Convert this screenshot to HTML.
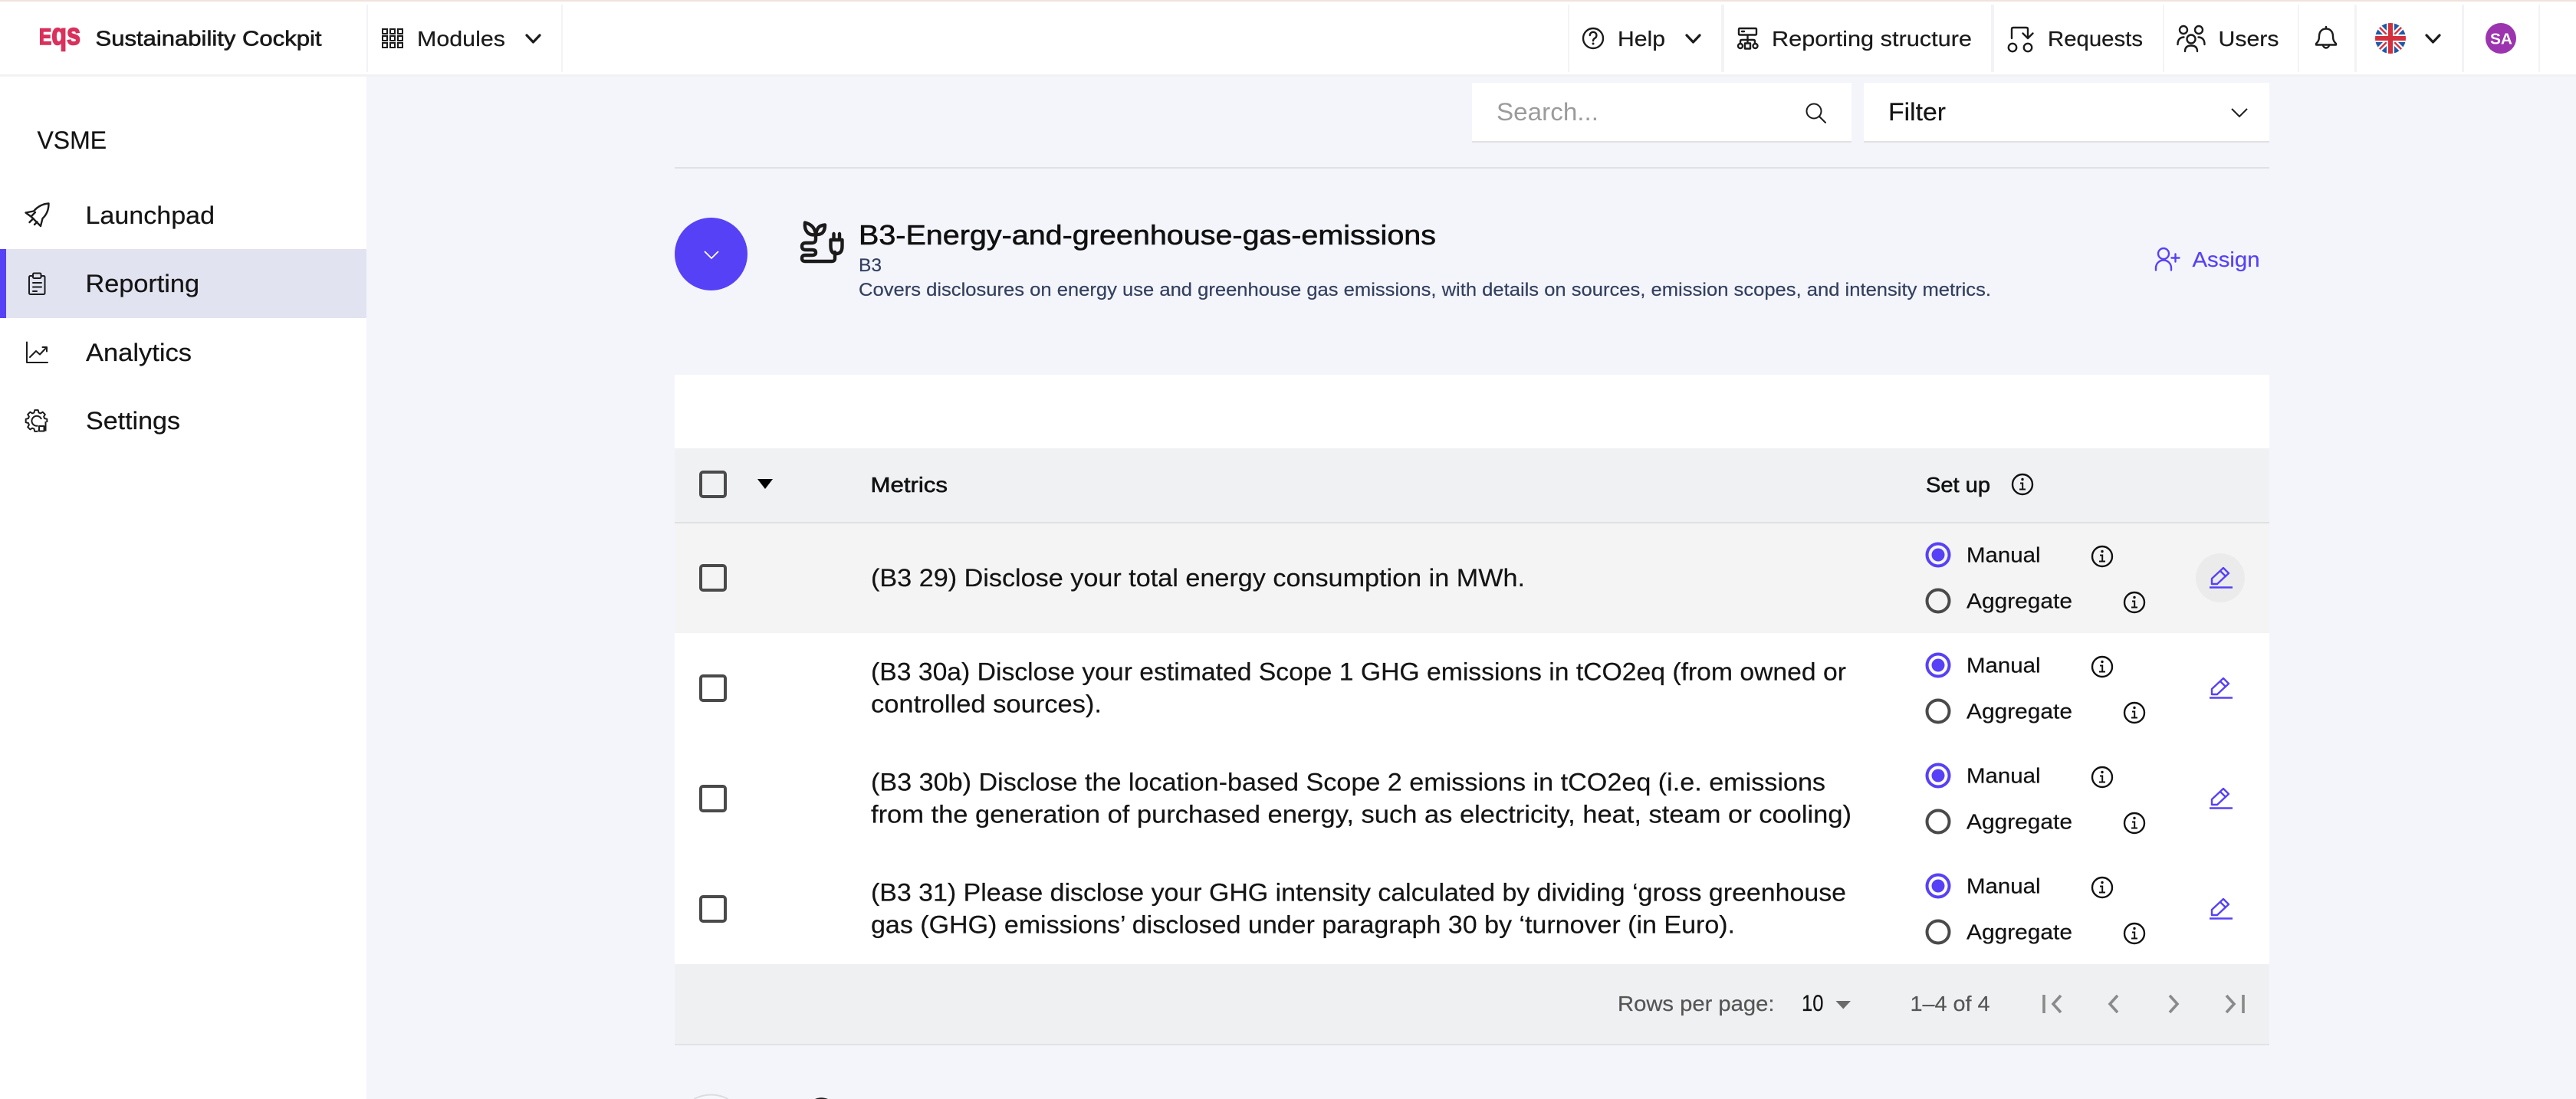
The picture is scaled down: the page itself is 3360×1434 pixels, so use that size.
<!DOCTYPE html>
<html lang="en">
<head>
<meta charset="utf-8">
<title>VSME Reporting</title>
<style>
html,body{margin:0;padding:0;background:#f4f5fb;width:3360px;height:1434px;overflow:hidden}
svg{display:block}
text{font-family:"Liberation Sans",sans-serif;font-size:32px;fill:#141414;white-space:pre;stroke:#141414;stroke-width:.2px}
.h{font-size:28px;fill:#1a1a1a}
.m{stroke:#141414;stroke-width:.6px}
.s{font-size:28px;fill:#111}
.d{font-size:24px;fill:#33405f;stroke:#33405f}
.g{font-size:28px;fill:#555;stroke:#555}
.ic{fill:none;stroke:#1c1c1c;stroke-width:2.4;stroke-linecap:round;stroke-linejoin:round}
.p{fill:none;stroke:#5641f6;stroke-width:2.4;stroke-linecap:round;stroke-linejoin:round}
.lg{font-weight:700;fill:#d9305c;stroke:#d9305c;stroke-width:1.6px}
</style>
</head>
<body>
<svg xmlns="http://www.w3.org/2000/svg" width="3360" height="1434" viewBox="0 0 3360 1434">
<defs>
<g id="info"><circle cx="0" cy="0" r="13" fill="none" stroke="#111" stroke-width="2.4"/><circle cx="0" cy="-6.5" r="1.7" fill="#111"/><path d="M-3-1.5h3.2V6M-4 6.5h8" fill="none" stroke="#111" stroke-width="2"/></g>
<g id="radioOn"><circle r="14.5" fill="none" stroke="#5641f6" stroke-width="4"/><circle r="8.5" fill="#5641f6"/></g>
<g id="radioOff"><circle r="14.5" fill="none" stroke="#4a4a4a" stroke-width="4"/></g>
<g id="pencil"><path class="p" d="M2885 762v-7l15-14 7 7-15 14zM2896 745l7 7"/><path d="M2882 766.500h30" stroke="#5641f6" stroke-width="2.4" fill="none"/></g>
<rect id="cb" width="32" height="32" rx="3" fill="none" stroke="#4a4a4a" stroke-width="4"/>
<clipPath id="fc"><circle cx="3118" cy="50" r="20"/></clipPath>
</defs>

<!-- page -->
<rect width="3360" height="1434" fill="#f4f5fb"/>

<!-- top bar -->
<rect width="3360" height="98" fill="#fff"/>
<rect width="3360" height="2" fill="#f1e3d9"/>
<rect y="97" width="3360" height="3" fill="#f2f2f4"/>
<rect x="0" y="100" width="478" height="1334" fill="#fff"/>
<g fill="#f3f3f5">
<rect x="478" y="6" width="2" height="88"/><rect x="732" y="6" width="2" height="88"/>
<rect x="2045" y="6" width="2" height="88"/><rect x="2245" y="6" width="4" height="88"/>
<rect x="2597" y="6" width="4" height="88"/><rect x="2821" y="6" width="2" height="88"/>
<rect x="2997" y="6" width="2" height="88"/><rect x="3071" y="6" width="3" height="88"/>
<rect x="3211" y="6" width="3" height="88"/><rect x="3311" y="6" width="2" height="88"/>
</g>

<!-- logo -->
<text x="51" y="58" class="lg" style="font-size:30px" textLength="54" lengthAdjust="spacingAndGlyphs">E<tspan style="font-size:40px">q</tspan><tspan style="font-size:40px">s</tspan></text>
<text x="124.500" y="59.500" class="h m" textLength="295" lengthAdjust="spacingAndGlyphs">Sustainability Cockpit</text>

<!-- modules -->
<g fill="none" stroke="#1c1c1c" stroke-width="2">
<rect x="499" y="38" width="6" height="6"/><rect x="509" y="38" width="6" height="6"/><rect x="519" y="38" width="6" height="6"/>
<rect x="499" y="47" width="6" height="6"/><rect x="509" y="47" width="6" height="6"/><rect x="519" y="47" width="6" height="6"/>
<rect x="499" y="56" width="6" height="6"/><rect x="509" y="56" width="6" height="6"/><rect x="519" y="56" width="6" height="6"/>
</g>
<text x="544" y="60" class="h" textLength="115" lengthAdjust="spacingAndGlyphs">Modules</text>
<path d="M687 46l8.500 9 8.500-9" fill="none" stroke="#1c1c1c" stroke-width="3.200" stroke-linecap="round" stroke-linejoin="round"/>

<!-- help -->
<circle cx="2078" cy="50" r="13" fill="none" stroke="#1c1c1c" stroke-width="2.400"/>
<path class="ic" d="M2073.800 46a4.300 4.300 0 1 1 6.500 3.800c-1.500.9-2.300 1.700-2.300 3.400"/>
<circle cx="2078" cy="57" r="1.500" fill="#1c1c1c"/>
<text x="2110" y="60" class="h" textLength="62" lengthAdjust="spacingAndGlyphs">Help</text>
<path d="M2200 46l8.500 9 8.500-9" fill="none" stroke="#1c1c1c" stroke-width="3.200" stroke-linecap="round" stroke-linejoin="round"/>

<!-- reporting structure -->
<g class="ic">
<rect x="2268" y="37" width="23" height="8.500" rx="1"/><path d="M2272 41h3M2279.500 46v6M2270 57v-3q0-2 2-2h15q2 0 2 2v3M2279.500 52v4"/>
<circle cx="2270" cy="60" r="3"/><circle cx="2289.500" cy="60" r="3"/><rect x="2276" y="56.500" width="7" height="7"/>
</g>
<text x="2311" y="60" class="h" textLength="261" lengthAdjust="spacingAndGlyphs">Reporting structure</text>

<!-- requests -->
<g class="ic">
<path d="M2624 50V38q0-2 2-2h17q2 0 2 2v12M2638.500 43.500l6.500 6.500 6.500-6.500"/>
<circle cx="2625" cy="62" r="5.200"/><circle cx="2645" cy="62" r="5.200"/>
</g>
<text x="2671" y="60" class="h" textLength="124" lengthAdjust="spacingAndGlyphs">Requests</text>

<!-- users -->
<g class="ic">
<circle cx="2848" cy="39" r="5"/><circle cx="2868" cy="39" r="5"/><circle cx="2858" cy="51" r="5.500"/>
<path d="M2840.500 58q0-9 8-9.500M2875.500 58q0-9-8-9.500M2850 67q0-7.500 8-7.500t8 7.500"/>
</g>
<text x="2893.500" y="60" class="h" textLength="79" lengthAdjust="spacingAndGlyphs">Users</text>

<!-- bell -->
<g class="ic">
<path d="M3034 35v2.500c-6 0-9 4.500-9 10 0 5-1.500 7-4 9.500v1.500h26V57c-2.500-2.500-4-4.500-4-9.500 0-5.500-3-10-9-10"/>
<path d="M3030 58.500a4 4 0 0 0 8 0"/>
</g>

<!-- flag -->
<g clip-path="url(#fc)">
<rect x="3098" y="30" width="40" height="40" fill="#2058a8"/>
<path d="M3098 30l40 40M3138 30l-40 40" stroke="#fff" stroke-width="7"/>
<path d="M3098 30l40 40M3138 30l-40 40" stroke="#d8323f" stroke-width="2.500"/>
<path d="M3118 30v40M3098 50h40" stroke="#fff" stroke-width="10"/>
<path d="M3118 30v40M3098 50h40" stroke="#d42f3d" stroke-width="6"/>
</g>
<path d="M3165 46l8.500 9 8.500-9" fill="none" stroke="#1c1c1c" stroke-width="3.200" stroke-linecap="round" stroke-linejoin="round"/>

<!-- avatar -->
<circle cx="3262" cy="50" r="20" fill="#9b34ae"/>
<text x="3248" y="57.500" style="font-size:20px;font-weight:700;fill:#fff;stroke:none" textLength="29" lengthAdjust="spacingAndGlyphs">SA</text>

<!-- sidebar -->
<text x="48.500" y="194" textLength="90.500" lengthAdjust="spacingAndGlyphs">VSME</text>
<rect x="0" y="325" width="478" height="90" fill="#e1e3f0"/>
<rect x="0" y="325" width="8" height="90" fill="#5641f6"/>
<text x="111.500" y="292" textLength="168.500" lengthAdjust="spacingAndGlyphs">Launchpad</text>
<text x="111.500" y="381" textLength="148.500" lengthAdjust="spacingAndGlyphs">Reporting</text>
<text x="112" y="471" textLength="138" lengthAdjust="spacingAndGlyphs">Analytics</text>
<text x="112" y="560" textLength="123" lengthAdjust="spacingAndGlyphs">Settings</text>

<g class="ic">
<path d="M63.500 265.500c-8 .5-14 3.500-19.500 10l-10.500 2 7.500 5.500 8 8 4 4 2.500-10c5.500-5 8-11.500 8-19.500z"/>
<path d="M41 282l5-5M38.500 290l5-5M45 293l3.500-3.500"/>
</g>
<g class="ic" stroke-width="2">
<rect x="38" y="360" width="20.500" height="24" rx="1.500" style="stroke-width:2"/><rect x="43" y="356.500" width="10.500" height="6.500" rx="1.500" fill="#e1e3f0" style="stroke-width:2;fill:#e1e3f0"/>
<path d="M43 369h11M43 374.500h11M43 380h5" style="stroke-width:2"/>
</g>
<g class="ic" style="stroke-width:2">
<path d="M35 446.500V473h27" style="stroke-width:2"/><path d="M39 466l8-8 5 4.500 9-9.500M55.500 453h5.500v5.500" style="stroke-width:2"/>
</g>
<g transform="translate(47.500 549)" fill="none" stroke="#1c1c1c" stroke-width="2" stroke-linejoin="round">
<polygon points="10.57,-3.03 13.83,-2.19 13.83,2.19 10.57,3.03 9.62,5.33 11.33,8.23 8.23,11.33 5.33,9.62 3.03,10.57 2.19,13.83 -2.19,13.83 -3.03,10.57 -5.33,9.62 -8.23,11.33 -11.33,8.23 -9.62,5.33 -10.57,3.03 -13.83,2.19 -13.83,-2.19 -10.57,-3.03 -9.62,-5.33 -11.33,-8.23 -8.23,-11.33 -5.33,-9.62 -3.03,-10.57 -2.19,-13.83 2.19,-13.83 3.03,-10.57 5.33,-9.62 8.23,-11.33 11.33,-8.23 9.62,-5.33"/>
<path d="M3.500 6a6.500 6.500 0 1 1 3-8"/>
<rect x="2" y="2" width="14" height="14" fill="#fff" stroke="none"/>
<rect x="3.500" y="7" width="6.500" height="6.500"/><path d="M12 1v12.500"/>
</g>

<!-- search & filter -->
<rect x="1920" y="108" width="495" height="76" fill="#fff"/>
<rect x="1920" y="184" width="495" height="2" fill="#e1e1e1"/>
<rect x="2431" y="108" width="529" height="76" fill="#fff"/>
<rect x="2431" y="184" width="529" height="2" fill="#e1e1e1"/>
<text x="1952" y="157" style="fill:#9b9b9b;stroke:none" textLength="133" lengthAdjust="spacingAndGlyphs">Search...</text>
<circle cx="2366" cy="145" r="9.500" fill="none" stroke="#1c1c1c" stroke-width="2"/>
<path d="M2373 152l8 8" stroke="#1c1c1c" stroke-width="2" stroke-linecap="round"/>
<text x="2463" y="157" textLength="75" lengthAdjust="spacingAndGlyphs">Filter</text>
<path d="M2911 142l10 10 10-10" fill="none" stroke="#1c1c1c" stroke-width="2"/>
<rect x="880" y="218" width="2080" height="2" fill="#e0e1e5"/>

<!-- accordion head -->
<circle cx="927.500" cy="331.500" r="47.500" fill="#5641f6"/>
<path d="M919 328l9 9 9-9" fill="none" stroke="#fff" stroke-width="1.800"/>
<g fill="none" stroke="#1b1b1b" stroke-width="4.400" stroke-linecap="round" stroke-linejoin="round">
<path d="M1064 307v5q0 5-5 5h-8q-5 0-5 4.500t5 4.500h8q5 0 5 3.500t-5 3.500h-9q-4 0-4 4t4 4h35q4 0 4-4v-8"/>
<path d="M1064 306q-1-7-4.500-10.500T1050 290.500q-1 8 3 12.500t11 3z"/>
<path d="M1064 306q1-6 3.500-9t8.500-3.500q0 7-3 10t-9 2.500z"/>
<path d="M1083.500 313h15v8q0 10-7.500 10t-7.500-10zM1087.500 305v8M1095 305v8"/>
</g>
<text x="1120" y="319" class="m" style="font-size:36px;fill:#0f0f0f" textLength="753" lengthAdjust="spacingAndGlyphs">B3-Energy-and-greenhouse-gas-emissions</text>
<text x="1120" y="354" class="d" textLength="30" lengthAdjust="spacingAndGlyphs">B3</text>
<text x="1120" y="386" class="d" textLength="1477" lengthAdjust="spacingAndGlyphs">Covers disclosures on energy use and greenhouse gas emissions, with details on sources, emission scopes, and intensity metrics.</text>

<g class="p">
<circle cx="2822" cy="331" r="7"/><path d="M2812 352.500v-3a10 10 0 0 1 20 0v3M2832.500 336.500h10M2837.500 331.500v10"/>
</g>
<text x="2859.500" y="348" style="font-size:28px;fill:#5641f6;stroke:#5641f6" textLength="88" lengthAdjust="spacingAndGlyphs">Assign</text>

<!-- table -->
<rect x="880" y="489" width="2080" height="96" fill="#fff"/>
<rect x="880" y="585" width="2080" height="96" fill="#f0f1f3"/>
<rect x="880" y="681" width="2080" height="2" fill="#e0e1e3"/>
<rect x="880" y="683" width="2080" height="143" fill="#f4f4f5"/>
<rect x="880" y="826" width="2080" height="432" fill="#fff"/>
<rect x="880" y="1258" width="2080" height="104" fill="#eff0f2"/>
<rect x="880" y="1362" width="2080" height="2" fill="#e2e3e6"/>

<use href="#cb" x="914" y="616"/>
<path d="M988 625h20l-10 13z" fill="#000"/>
<text x="1135.500" y="642" class="s m" textLength="100.500" lengthAdjust="spacingAndGlyphs">Metrics</text>
<text x="2512" y="642" class="s m" textLength="84" lengthAdjust="spacingAndGlyphs">Set up</text>
<use href="#info" x="2638" y="632"/>

<!-- checkboxes -->
<use href="#cb" x="914" y="738"/><use href="#cb" x="914" y="882"/><use href="#cb" x="914" y="1026"/><use href="#cb" x="914" y="1170"/>

<!-- metric text -->
<text x="1136" y="765" textLength="853" lengthAdjust="spacingAndGlyphs">(B3 29) Disclose your total energy consumption in MWh.</text>
<text x="1136" y="887.500" textLength="1272" lengthAdjust="spacingAndGlyphs">(B3 30a) Disclose your estimated Scope 1 GHG emissions in tCO2eq (from owned or</text>
<text x="1136" y="929.500" textLength="301" lengthAdjust="spacingAndGlyphs">controlled sources).</text>
<text x="1136" y="1031.500" textLength="1245" lengthAdjust="spacingAndGlyphs">(B3 30b) Disclose the location-based Scope 2 emissions in tCO2eq (i.e. emissions</text>
<text x="1136" y="1073.500" textLength="1279" lengthAdjust="spacingAndGlyphs">from the generation of purchased energy, such as electricity, heat, steam or cooling)</text>
<text x="1136" y="1175.500" textLength="1272" lengthAdjust="spacingAndGlyphs">(B3 31) Please disclose your GHG intensity calculated by dividing ‘gross greenhouse</text>
<text x="1136" y="1217.500" textLength="1127" lengthAdjust="spacingAndGlyphs">gas (GHG) emissions’ disclosed under paragraph 30 by ‘turnover (in Euro).</text>

<!-- set up column -->
<use href="#radioOn" x="2528" y="724"/><use href="#radioOff" x="2528" y="784"/>
<use href="#radioOn" x="2528" y="868"/><use href="#radioOff" x="2528" y="928"/>
<use href="#radioOn" x="2528" y="1012"/><use href="#radioOff" x="2528" y="1072"/>
<use href="#radioOn" x="2528" y="1156"/><use href="#radioOff" x="2528" y="1216"/>

<text x="2565" y="733.500" class="s" textLength="96.500" lengthAdjust="spacingAndGlyphs">Manual</text>
<text x="2565" y="793.500" class="s" textLength="138" lengthAdjust="spacingAndGlyphs">Aggregate</text>
<text x="2565" y="877.500" class="s" textLength="96.500" lengthAdjust="spacingAndGlyphs">Manual</text>
<text x="2565" y="937.500" class="s" textLength="138" lengthAdjust="spacingAndGlyphs">Aggregate</text>
<text x="2565" y="1021.500" class="s" textLength="96.500" lengthAdjust="spacingAndGlyphs">Manual</text>
<text x="2565" y="1081.500" class="s" textLength="138" lengthAdjust="spacingAndGlyphs">Aggregate</text>
<text x="2565" y="1165.500" class="s" textLength="96.500" lengthAdjust="spacingAndGlyphs">Manual</text>
<text x="2565" y="1225.500" class="s" textLength="138" lengthAdjust="spacingAndGlyphs">Aggregate</text>

<use href="#info" x="2742" y="726"/><use href="#info" x="2784" y="786"/>
<use href="#info" x="2742" y="870"/><use href="#info" x="2784" y="930"/>
<use href="#info" x="2742" y="1014"/><use href="#info" x="2784" y="1074"/>
<use href="#info" x="2742" y="1158"/><use href="#info" x="2784" y="1218"/>

<circle cx="2896" cy="754" r="32" fill="#ebebeb"/>
<use href="#pencil"/>
<use href="#pencil" y="144"/>
<use href="#pencil" y="288"/>
<use href="#pencil" y="432"/>

<!-- pagination -->
<text x="2110" y="1319" class="g" textLength="204.500" lengthAdjust="spacingAndGlyphs">Rows per page:</text>
<text x="2350" y="1319" class="s" style="font-size:30px" textLength="28.500" lengthAdjust="spacingAndGlyphs">10</text>
<path d="M2394.500 1306h19.500l-9.750 10.500z" fill="#6b6b6b"/>
<text x="2491.500" y="1319" class="g" textLength="104" lengthAdjust="spacingAndGlyphs">1–4 of 4</text>
<g fill="none" stroke="#8a8a8a" stroke-width="3.600">
<path d="M2666 1298v24M2688 1299l-10 11 10 11"/>
<path d="M2762 1299l-10 11 10 11"/>
<path d="M2830 1299l10 11-10 11"/>
<path d="M2904 1299l10 11-10 11M2926 1298v24"/>
</g>

<!-- next accordion, top edge only -->
<path d="M905.300 1434A47.500 47.500 0 0 1 949.700 1434" fill="#f6f7fc" stroke="#dcdcdf" stroke-width="2"/>
<path d="M1063 1434q8-3.500 17 0z" fill="#1b1b1b"/>
</svg>
</body>
</html>
